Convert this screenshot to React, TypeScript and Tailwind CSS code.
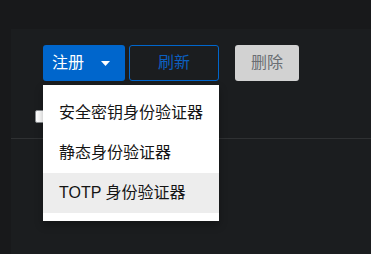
import React from "react";

export default function App() {
  return (
    <div
      className="w-[371px] h-[254px] bg-[#18191b] overflow-hidden"
      style={{ fontFamily: '"Liberation Sans", "Noto Sans CJK SC", sans-serif' }}
    >
      <div className="ml-[11px] mt-[29px] h-[225px] bg-[#1b1d1f] relative">
        <div className="pt-[16px] pl-[32px] flex items-center">
          <div className="relative">
            <button className="w-[82px] h-[36px] bg-[#0066cc] rounded-[3px] text-white text-[16px] flex items-center pl-[9px]">
              <span>注册</span>
              <svg className="ml-[17px]" width="9" height="5" viewBox="0 0 9 5">
                <path d="M0 0 L9 0 L4.5 5 Z" fill="#ffffff" />
              </svg>
            </button>
            <div className="absolute left-0 top-[40px] w-[176px] bg-white py-[8px] z-10 shadow-[0_4px_8px_rgba(0,0,0,0.3)]">
              <div className="h-[40px] flex items-center pl-[16px] text-[16px] text-[#151515]">安全密钥身份验证器</div>
              <div className="h-[40px] flex items-center pl-[16px] text-[16px] text-[#151515]">静态身份验证器</div>
              <div className="h-[40px] flex items-center pl-[16px] text-[16px] text-[#151515] bg-[#ededed]">TOTP 身份验证器</div>
            </div>
          </div>
          <button className="ml-[4px] w-[90px] h-[36px] border border-[#0066cc] rounded-[3px] text-[#0b5fbf] text-[16px] flex items-center justify-center">
            刷新
          </button>
          <button className="ml-[16px] w-[64px] h-[36px] bg-[#d2d2d2] rounded-[3px] text-[#6a6e73] text-[16px] flex items-center justify-center">
            删除
          </button>
        </div>
        <div className="pl-[24px] pt-[29px] h-[58px] border-b border-[#2f3133]">
          <div className="w-[13px] h-[13px] bg-white border border-[#8a8d90] rounded-[2px]" />
        </div>
      </div>
    </div>
  );
}
